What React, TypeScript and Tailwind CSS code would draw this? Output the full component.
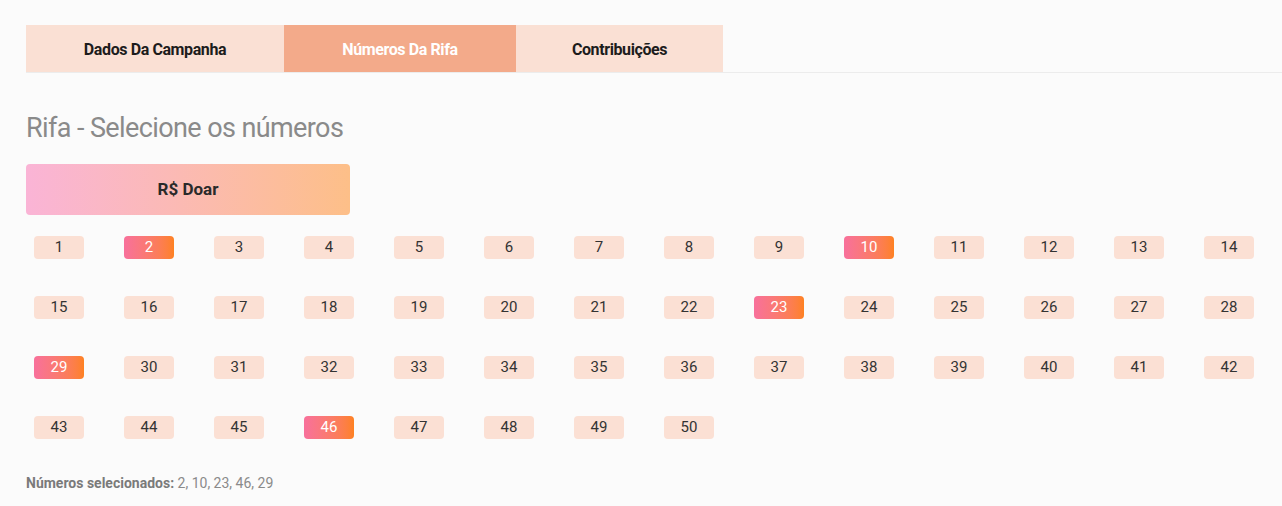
import React from 'react';

const font = { fontFamily: 'Roboto, "Liberation Sans", sans-serif' };

export default function App() {
  const [active, setActive] = React.useState('numeros');
  const [selected, setSelected] = React.useState<number[]>([2, 10, 23, 46, 29]);

  const tabs = [
    { id: 'dados', label: 'Dados Da Campanha', w: 'w-[258px]' },
    { id: 'numeros', label: 'Números Da Rifa', w: 'w-[232px]' },
    { id: 'contrib', label: 'Contribuições', w: 'w-[207px]' },
  ];

  const toggle = (n: number) =>
    setSelected((s) => (s.includes(n) ? s.filter((x) => x !== n) : [...s, n]));

  return (
    <div className="min-h-[506px] bg-[#fbfbfb] pt-[25px]" style={font}>
      {/* Tabs */}
      <div className="ml-[26px] flex border-b border-[#ececec]">
        {tabs.map((t) => (
          <button
            key={t.id}
            onClick={() => setActive(t.id)}
            className={
              'h-[47px] pt-[2px] text-[16px] font-bold tracking-[-0.4px] ' +
              t.w +
              (active === t.id ? ' bg-[#f3aa8a] text-white' : ' bg-[#fae0d4] text-[#1c1c1c]')
            }
          >
            {t.label}
          </button>
        ))}
      </div>

      <div className="px-[26px]">
        <h2 className="mt-[38px] text-[27px] leading-[34px] tracking-[-0.6px] text-[#8a8a8a]">Rifa - Selecione os números</h2>

        <button className="mt-[19px] h-[51px] w-[324px] rounded-[4px] bg-gradient-to-r from-[#fab4d6] to-[#fdbf88] text-[17px] font-bold text-[#2a2a2a]">
          R$ Doar
        </button>

        {/* Numbers */}
        <div className="mt-[21px] grid grid-cols-[repeat(14,50px)] gap-x-[40px] gap-y-[37px] pl-[8px]">
          {Array.from({ length: 50 }, (_, i) => i + 1).map((n) => {
            const on = selected.includes(n);
            return (
              <button
                key={n}
                onClick={() => toggle(n)}
                className={
                  'h-[23px] w-[50px] rounded-[4px] text-[15px] leading-[23px] ' +
                  (on ? 'bg-gradient-to-r from-[#f8709b] to-[#fe8120] text-white' : 'bg-[#fbe0d4] text-[#333]')
                }
              >
                {n}
              </button>
            );
          })}
        </div>

        <p className="mt-[34px] text-[14px] text-[#8a8a8a]">
          <span className="font-bold text-[#7a7a7a]">Números selecionados:</span> {selected.join(', ')}
        </p>
      </div>
    </div>
  );
}
